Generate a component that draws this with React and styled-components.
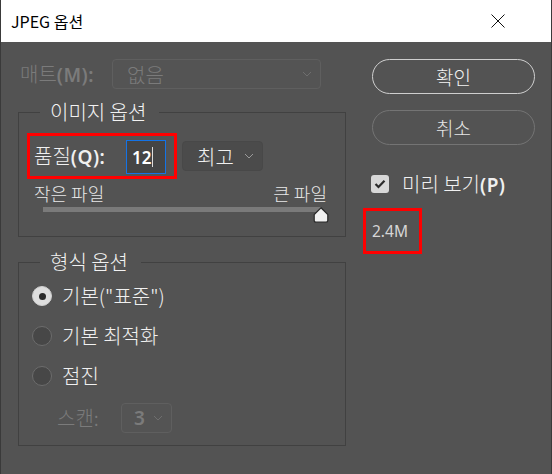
import React from "react";
import styled, { createGlobalStyle } from "styled-components";

const GlobalStyle = createGlobalStyle`
  html, body {
    margin: 0;
    padding: 0;
    background: #535353;
  }
  * {
    box-sizing: border-box;
  }
`;

const Window = styled.div`
  width: 552px;
  height: 474px;
  background: #535353;
  border-left: 1px solid #3a3a3a;
  border-right: 1px solid #3a3a3a;
  font-family: "Noto Sans CJK KR", "Noto Sans", sans-serif;
  overflow: hidden;
`;

const TitleBar = styled.div`
  height: 42px;
  background: #ffffff;
  display: flex;
  align-items: center;
  justify-content: space-between;
  padding: 0 46px 0 10px;
  font-size: 16px;
  color: #000;
`;

const Body = styled.div`
  display: flex;
  padding: 17px 0 0 17px;
`;

const LeftColumn = styled.div`
  width: 328px;
  display: flex;
  flex-direction: column;
`;

const RightColumn = styled.div`
  width: 172px;
  margin-left: 17px;
  display: flex;
  flex-direction: column;
`;

const MatteRow = styled.div`
  height: 30px;
  display: flex;
  align-items: center;
`;

const Label = styled.span`
  font-size: 20px;
  font-weight: 300;
  color: ${(p) => (p.disabled ? "#7b7b7b" : "#f0f0f0")};
  width: ${(p) => (p.width ? `${p.width}px` : "auto")};
  margin-left: ${(p) => p.indent || 0}px;
  white-space: nowrap;
  line-height: 24px;
`;

const Latin = styled.span`
  font-family: "Noto Sans", sans-serif;
  font-weight: 600;
  font-size: 19px;
  letter-spacing: 0.5px;
`;

const Select = styled.div`
  width: ${(p) => p.width}px;
  height: 30px;
  border-radius: 4px;
  border: 1px solid ${(p) => (p.disabled ? "#5f5f5f" : "#484848")};
  background: ${(p) => (p.disabled ? "#545454" : "#4b4b4b")};
  display: flex;
  align-items: center;
  justify-content: space-between;
  padding: 0 8px 0 ${(p) => p.padLeft || 14}px;
  font-size: ${(p) => p.fontSize || 20}px;
  font-weight: 300;
  color: ${(p) => (p.disabled ? "#7b7b7b" : "#f0f0f0")};
`;

const Group = styled.fieldset`
  margin: ${(p) => p.top}px 0 0 0;
  padding: 0 0 ${(p) => p.bottom}px 0;
  border: 1px solid #414141;
  min-width: 0;
`;

const Legend = styled.legend`
  margin-left: 21px;
  padding: 0 13px 0 10px;
  font-size: 20px;
  font-weight: 300;
  line-height: 24px;
  color: #f2f2f2;
`;

const QualityRow = styled.div`
  margin: 9px 0 0 8px;
  display: flex;
  align-items: center;
  gap: 5px;
`;

const Highlight = styled.div`
  border: 3px solid #ff0000;
  height: 46px;
  display: flex;
  align-items: center;
  padding: 0 8px 0 4px;
`;

const NumberInput = styled.div`
  width: 40px;
  height: 34px;
  margin-top: 2px;
  background: #454545;
  border: 1px solid #1473e6;
  display: flex;
  align-items: center;
  padding-left: 5px;
  font-family: "Noto Sans", sans-serif;
  font-weight: 600;
  font-size: 17px;
  color: #ffffff;
`;

const Caret = styled.span`
  display: inline-block;
  width: 1px;
  height: 20px;
  background: #dddddd;
  margin-left: 1px;
`;

const SizeLabels = styled.div`
  margin: 4px 18px 0 15px;
  display: flex;
  justify-content: space-between;
  font-size: 18px;
  font-weight: 300;
  line-height: 20px;
  color: #e8e8e8;
`;

const SliderWrap = styled.div`
  position: relative;
  margin: 4px 0 0 24px;
  width: 286px;
  height: 16px;
`;

const Track = styled.div`
  margin-top: 1px;
  width: 278px;
  height: 5px;
  background: #7a7a7a;
`;

const Thumb = styled.svg`
  position: absolute;
  right: 0;
  top: 0;
`;

const RadioRow = styled.div`
  height: 40px;
  margin-top: ${(p) => p.mt || 0}px;
  display: flex;
  align-items: center;
  padding-left: 13px;
  gap: 10px;
`;

const RadioCircle = styled.span`
  width: 20px;
  height: 20px;
  border-radius: 50%;
  background: ${(p) => (p.checked ? "#dedede" : "#474747")};
  border: 1px solid ${(p) => (p.checked ? "#cfcfcf" : "#6c6c6c")};
  display: flex;
  align-items: center;
  justify-content: center;
  &::after {
    content: "";
    display: ${(p) => (p.checked ? "block" : "none")};
    width: 7px;
    height: 7px;
    border-radius: 50%;
    background: #2b2b2b;
  }
`;

const ScanRow = styled.div`
  height: 40px;
  margin-top: 2px;
  display: flex;
  align-items: center;
  padding-left: 38px;
`;

const PillButton = styled.div`
  width: 163px;
  height: 35px;
  margin: ${(p) => p.mt || 0}px 0 0 9px;
  border-radius: 18px;
  border: 1.5px solid ${(p) => (p.primary ? "#cfcfcf" : "#747474")};
  display: flex;
  align-items: center;
  justify-content: center;
  font-size: 19px;
  font-weight: 300;
  color: ${(p) => (p.primary ? "#f4f4f4" : "#e6e6e6")};
`;

const CheckRow = styled.div`
  margin: 27px 0 0 8px;
  height: 24px;
  display: flex;
  align-items: center;
  gap: 13px;
`;

const CheckBox = styled.span`
  width: 18px;
  height: 18px;
  border-radius: 3px;
  background: #d8d8d8;
  display: flex;
  align-items: center;
  justify-content: center;
`;

const SizeBox = styled(Highlight)`
  width: 59px;
  margin-top: 12px;
  padding: 0 0 0 6px;
  font-family: "Noto Sans", sans-serif;
  font-size: 15.5px;
  color: #d6d6d6;
`;

const Chevron = ({ color = "#9a9a9a" }) => (
  <svg width="10" height="6" viewBox="0 0 10 6">
    <path d="M1 1 L5 5 L9 1" fill="none" stroke={color} strokeWidth="1" />
  </svg>
);

const Radio = ({ checked, children, mt }) => (
  <RadioRow mt={mt}>
    <RadioCircle checked={checked} />
    <Label>{children}</Label>
  </RadioRow>
);

export default function App() {
  return (
    <>
      <GlobalStyle />
      <Window>
        <TitleBar>
          <span>JPEG 옵션</span>
          <svg width="14" height="14" viewBox="0 0 14 14">
            <path d="M0.5 0.5 L13.5 13.5 M13.5 0.5 L0.5 13.5" stroke="#111" strokeWidth="1" />
          </svg>
        </TitleBar>
        <Body>
          <LeftColumn>
            <MatteRow>
              <Label disabled width={92} indent={2}>
                매트<Latin>(M):</Latin>
              </Label>
              <Select disabled width={209}>
                <span>없음</span>
                <Chevron color="#6e6e6e" />
              </Select>
            </MatteRow>

            <Group top={11} bottom={13}>
              <Legend>이미지 옵션</Legend>
              <QualityRow>
                <Highlight>
                  <Label width={92}>
                    품질<Latin>(Q):</Latin>
                  </Label>
                  <NumberInput>
                    12
                    <Caret />
                  </NumberInput>
                </Highlight>
                <Select width={81}>
                  <span>최고</span>
                  <Chevron />
                </Select>
              </QualityRow>
              <SizeLabels>
                <span>작은 파일</span>
                <span>큰 파일</span>
              </SizeLabels>
              <SliderWrap>
                <Track />
                <Thumb width="16" height="16" viewBox="0 0 16 16">
                  <path
                    d="M8 0.8 L14.8 7.5 L14.8 13.5 Q14.8 15.2 13 15.2 L3 15.2 Q1.2 15.2 1.2 13.5 L1.2 7.5 Z"
                    fill="#f2f2f2"
                    stroke="#2a2a2a"
                    strokeWidth="1.2"
                  />
                </Thumb>
              </SliderWrap>
            </Group>

            <Group top={13} bottom={7}>
              <Legend>형식 옵션</Legend>
              <Radio checked mt={2}>
                기본("표준")
              </Radio>
              <Radio>기본 최적화</Radio>
              <Radio>점진</Radio>
              <ScanRow>
                <Label disabled width={64}>
                  스캔:
                </Label>
                <Select disabled width={51} padLeft={12} fontSize={17}>
                  <Latin>3</Latin>
                  <Chevron color="#6e6e6e" />
                </Select>
              </ScanRow>
            </Group>
          </LeftColumn>

          <RightColumn>
            <PillButton primary>확인</PillButton>
            <PillButton mt={16}>취소</PillButton>
            <CheckRow>
              <CheckBox>
                <svg width="12" height="10" viewBox="0 0 12 10">
                  <path d="M1.5 5 L4.5 8 L10.5 1.8" fill="none" stroke="#2b2b2b" strokeWidth="2.2" />
                </svg>
              </CheckBox>
              <Label>
                미리 보기<Latin>(P)</Latin>
              </Label>
            </CheckRow>
            <SizeBox>2.4M</SizeBox>
          </RightColumn>
        </Body>
      </Window>
    </>
  );
}
